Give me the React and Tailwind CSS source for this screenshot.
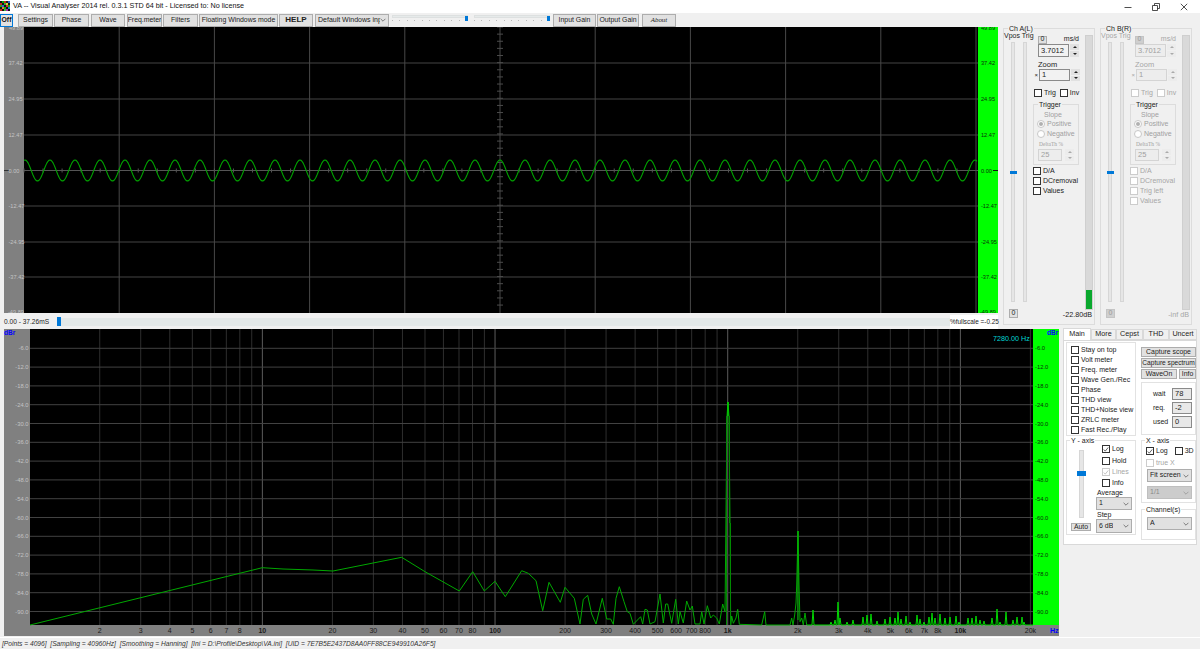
import React from "react";

const scopeY = [63, 99, 135, 170.5, 206, 242, 277];
const scopeLabels = ["37.42", "24.95", "12.47", "0.00", "-12.47", "-24.95", "-37.42"];
const scopeX = [119.2, 214.4, 309.6, 404.8, 500, 595.2, 690.4, 785.6, 880.8, 976];

function sinePoints() {
  const p = [];
  for (let x = 24; x <= 977; x += 1) {
    p.push(`${x},${(170.5 - 10.5 * Math.cos((2 * Math.PI * (x - 25)) / 25)).toFixed(2)}`);
  }
  return p.join(" ");
}

function Scope() {
  const ticks = [];
  for (let i = 0; i < 50; i++) ticks.push(24 + 19.04 * i);
  const vticks = [];
  for (let i = 0; i < 40; i++) vticks.push(27 + 7.13 * i);
  return (
    <svg viewBox="4 27 994 286" className="block w-[994px] h-[286px]">
      <rect x="4" y="27" width="20" height="286" fill="#808080" />
      <rect x="24" y="27" width="954" height="286" fill="#000" />
      <rect x="978" y="27" width="20" height="286" fill="#00ff00" />
      {scopeY.map((y) => (
        <line key={y} x1="24" x2="978" y1={y} y2={y} stroke={y === 170.5 ? "#555" : "#454545"} />
      ))}
      {scopeX.map((x) => (
        <line key={x} x1={x} x2={x} y1="27" y2="313" stroke="#484848" />
      ))}
      {ticks.map((x) => (
        <line key={x} x1={x} x2={x} y1="168.5" y2="172.5" stroke="#555" />
      ))}
      {vticks.map((y) => (
        <line key={y} x1="497" x2="503" y1={y} y2={y} stroke="#4c4c4c" />
      ))}
      <line x1="4" x2="9" y1="170.5" y2="170.5" stroke="#333" />
      <line x1="993" x2="998" y1="170.5" y2="170.5" stroke="#111" />
      <polyline points={sinePoints()} fill="none" stroke="#00a400" strokeWidth="1.1" />
      <g fontSize="5.6" fill="#c4c4c4">
        <text x="9" y="30">49.89</text>
        {scopeLabels.map((t, i) => (
          <text key={t} x="8.5" y={scopeY[i] + 2}>{t}</text>
        ))}
        <text x="8" y="314">-49.89</text>
      </g>
      <g fontSize="5.6" fill="#0a300a">
        <text x="981" y="30">49.89</text>
        {scopeLabels.map((t, i) => (
          <text key={t} x="981" y={scopeY[i] + 2}>{t}</text>
        ))}
        <text x="980" y="314">-49.89</text>
      </g>
    </svg>
  );
}

const fx = (f) => 29.7 + 232.67 * Math.log10(f);

const minorF = [2, 3, 4, 5, 6, 7, 8, 9, 20, 30, 40, 50, 60, 70, 80, 90, 200, 300, 400, 500, 600, 700, 800, 900, 2000, 3000, 4000, 5000, 6000, 7000, 8000, 9000, 20000];
const majorF = [10, 100, 1000, 10000];
const freqLabels = [
  [2, "2"], [3, "3"], [4, "4"], [5, "5"], [6, "6"], [7, "7"], [8, "8"], [10, "10", 1], [20, "20"], [30, "30"], [40, "40"], [50, "50"], [60, "60"], [70, "70"], [80, "80"], [100, "100", 1], [200, "200"], [300, "300"], [400, "400"], [500, "500"], [600, "600"], [700, "700"], [800, "800"], [1000, "1k", 1], [2000, "2k"], [3000, "3k"], [4000, "4k"], [5000, "5k"], [6000, "6k"], [7000, "7k"], [8000, "8k"], [10000, "10k", 1], [20000, "20k"],
];

const trace = "30,625 262.3,567.7 283,569 313,570 333,571 401.7,557.3 425,571.7 459.3,591 472.7,571.7 484.3,591 495,581.3 505.3,596.7 521.7,570.7 528.3,573.3 536,580.7 542.7,610.7 549,582.3 560.3,602.3 565,587.3 574.3,598.3 580,624 583.3,599.3 587.7,595.3 591.7,614 596,624 602.3,598.3 606.7,619 610.7,619 613.3,624.3 616,598.3 619.3,586.7 624,601.7 627.3,611.7 630,613.3 633.3,624.3 640.7,616.7 642.7,624 645,609.3 647.3,610 650,624 655,621.7 660,594 663.3,623 665.7,604 667.7,604 671.7,623.3 675.7,599.3 678.3,624 680,611.7 683.3,623 686.7,601 690,610 692.3,606 695,624 700,624 701.7,611.7 704,624 707.3,605.7 710.7,618 713.3,615 716.7,618 719.3,624 722.7,604 725,611.7 726,515 727,416 728,402 729,416 730,523 730.7,625 731.7,616 733.3,623.3 736,618 737.7,609.3 739.3,624.3 761.7,625 764.7,611.7 766,625 790,625 791.7,618 793,625 794.7,615 796,603 796.7,585 798,531 799,585 800,621.7 801.7,618 803.3,625 805,613 806.7,625";

const spikes = [[813, 610], [831, 622], [835, 620], [838, 602], [840, 618], [847, 622], [853, 620], [863, 617], [867, 615], [871, 614], [877, 621], [885, 619], [890, 617], [895, 618], [898, 612], [901, 619], [906, 616], [910, 622], [917, 615], [920, 619], [924, 622], [929, 617], [932, 613], [935, 618], [940, 614], [945, 618], [950, 617], [956, 616], [959, 622], [968, 618], [972, 618], [976, 616], [980, 620], [984, 621], [992, 618], [997, 609], [1000, 622], [1006, 612], [1013, 620], [1017, 617], [1022, 617], [1024, 622]];

function Spectrum() {
  const hs = [];
  for (let k = 1; k <= 15; k++) hs.push([329.5 + 18.8 * k, `-${6 * k}.0`]);
  const spikePts = ["807,625"];
  spikes.forEach(([x, y]) => {
    spikePts.push(`${x - 1},625`, `${x},${y}`, `${x + 1},625`);
  });
  spikePts.push("1033,625");
  return (
    <svg viewBox="4 329 1055 307" className="block w-[1055px] h-[307px]">
      <rect x="4" y="329" width="1055" height="307" fill="#808080" />
      <rect x="30" y="329" width="1003" height="296" fill="#000" />
      <rect x="1033" y="329" width="26" height="296" fill="#00ff00" />
      {minorF.map((f) => (
        <line key={f} x1={fx(f)} x2={fx(f)} y1="329" y2="625" stroke="#2e2e2e" />
      ))}
      {majorF.map((f) => (
        <line key={f} x1={fx(f)} x2={fx(f)} y1="329" y2="625" stroke="#5c5c5c" />
      ))}
      {hs.map(([y]) => (
        <line key={y} x1="30" x2="1033" y1={y} y2={y} stroke="#424242" />
      ))}
      <polyline points={spikePts.join(" ")} fill="none" stroke="#00d800" strokeWidth="1" />
      <polyline points={trace} fill="none" stroke="#00a800" strokeWidth="1" />
      <line x1="726.5" x2="726.5" y1="416" y2="625" stroke="#008a00" />
      <line x1="729.5" x2="729.5" y1="416" y2="523" stroke="#008a00" />
      <line x1="730.5" x2="730.5" y1="523" y2="625" stroke="#008a00" />
      <line x1="728" x2="728" y1="402" y2="416" stroke="#00d000" strokeWidth="1.4" />
      <line x1="798" x2="798" y1="531" y2="620" stroke="#00c000" />
      <g fontSize="5.8" fill="#c4c4c4">
        {hs.map(([y, t]) => (
          <text key={t} x="28.5" y={y + 2} textAnchor="end">{t}</text>
        ))}
      </g>
      <g fontSize="5.8" fill="#0a300a">
        {hs.map(([y, t]) => (
          <text key={t} x="1035" y={y + 2}>{t}</text>
        ))}
      </g>
      <g fontSize="7" fill="#1a1a1a">
        {freqLabels.map(([f, t, b]) => (
          <text key={t} x={fx(f)} y="633" textAnchor="middle" fontWeight={b ? "700" : "400"}>{t}</text>
        ))}
      </g>
      <text x="4" y="335" fontSize="6.5" fontWeight="700" fill="#0000ff">dBr</text>
      <text x="1047" y="335" fontSize="6.5" fontWeight="700" fill="#0000ff">dBr</text>
      <text x="1050" y="632.5" fontSize="7" fontWeight="700" fill="#0000ff">Hz</text>
      <text x="993" y="341" fontSize="7.2" fill="#00d8d8">7280.00 Hz</text>
    </svg>
  );
}

function Btn({ className = "", children }) {
  return (
    <div className={`flex items-center justify-center h-[13px] shrink-0 bg-[#e1e1e1] border border-[#adadad] text-[#222] text-[6.9px] whitespace-nowrap overflow-hidden ${className}`}>
      {children}
    </div>
  );
}

function Chevron({ color = "#444" }) {
  return (
    <svg viewBox="0 0 7 5" className="w-[6px] h-[4px] shrink-0">
      <path d="M0.5 1 L3.5 4 L6.5 1" fill="none" stroke={color} strokeWidth="0.8" />
    </svg>
  );
}

function Sel({ className = "", children, dis }) {
  return (
    <div className={`flex items-center justify-between pl-[2px] pr-[2px] shrink-0 border overflow-hidden whitespace-nowrap text-[7px] ${dis ? "bg-[#cccccc] border-[#bfbfbf] text-[#8a8a8a]" : "bg-[#e1e1e1] border-[#adadad] text-[#222]"} ${className}`}>
      <span className="overflow-hidden">{children}</span>
      <Chevron color={dis ? "#8a8a8a" : "#444"} />
    </div>
  );
}

function Check({ label, checked, dis, className = "" }) {
  return (
    <div className={`flex items-center gap-[2px] h-[10px] text-[7px] whitespace-nowrap ${dis ? "text-[#a6a6a6]" : "text-[#222]"} ${className}`}>
      <span className={`flex items-center justify-center w-[8px] h-[8px] shrink-0 border bg-white ${dis ? "border-[#cccccc]" : "border-[#333]"}`}>
        {checked && (
          <svg viewBox="0 0 8 8" className="w-[7px] h-[7px]">
            <path d="M1 4 L3 6.2 L7 1.2" fill="none" stroke={dis ? "#b0b0b0" : "#333"} strokeWidth="1" />
          </svg>
        )}
      </span>
      {label}
    </div>
  );
}

function Radio({ label, checked }) {
  return (
    <div className="flex items-center gap-[2px] h-[10px] text-[7px] text-[#a0a0a0] whitespace-nowrap">
      <span className="flex items-center justify-center w-[8px] h-[8px] rounded-full border border-[#c8c8c8] bg-white shrink-0">
        {checked && <span className="w-[4px] h-[4px] rounded-full bg-[#b0b0b0]" />}
      </span>
      {label}
    </div>
  );
}

function Group({ label, className = "", children }) {
  return (
    <div className={`relative border border-[#dcdcdc] ${className}`}>
      <span className="absolute left-[4px] -top-[4px] px-[1px] leading-[8px] text-[7px] bg-[#f0f0f0] text-[#222] whitespace-nowrap">
        {label}
      </span>
      {children}
    </div>
  );
}

function Spin({ dis, className = "" }) {
  const c = dis ? "#aaa" : "#222";
  return (
    <div className={`flex flex-col gap-[1px] w-[9px] shrink-0 ${className}`}>
      <div className={`flex-1 flex items-center justify-center ${dis ? "bg-[#ececec]" : "bg-[#e1e1e1]"}`}>
        <svg viewBox="0 0 6 3" className="w-[4px] h-[2px]"><path d="M0 3 L3 0 L6 3Z" fill={c} /></svg>
      </div>
      <div className={`flex-1 flex items-center justify-center ${dis ? "bg-[#ececec]" : "bg-[#e1e1e1]"}`}>
        <svg viewBox="0 0 6 3" className="w-[4px] h-[2px]"><path d="M0 0 L3 3 L6 0Z" fill={c} /></svg>
      </div>
    </div>
  );
}

function Input({ className = "", dis, children }) {
  return (
    <div className={`flex items-center pl-[2px] border text-[7.5px] shrink-0 ${dis ? "bg-[#ededed] border-[#d4d4d4] text-[#a0a0a0]" : "bg-[#f2f2f2] border-[#8a8a8a] text-[#222]"} ${className}`}>
      {children}
    </div>
  );
}

function ChPanel({ name, dis, level, db }) {
  const text = dis ? "text-[#a6a6a6]" : "text-[#222]";
  return (
    <Group label={name} className="flex w-[92px] h-[297px] shrink-0">
      <div className="flex flex-col w-[29px] shrink-0 pt-[3px]">
        <div className={`text-[7px] leading-[8px] whitespace-nowrap ${text}`}>Vpos Trig</div>
        <div className="flex gap-[8px] ml-[7px] mt-[2px]">
          <div className="relative w-[4px] h-[260px] bg-[#e6e6e6] border border-[#d6d6d6]">
            <span className="absolute -left-[2px] top-[128px] w-[7px] h-[3px] bg-[#0078d7]" />
          </div>
          <div className="w-[4px] h-[260px] bg-[#e6e6e6] border border-[#d6d6d6]" />
        </div>
        <div className={`flex items-center justify-center ml-[5px] mt-[7px] w-[9px] h-[9px] text-[7px] border ${dis ? "bg-[#cfcfcf] border-[#c4c4c4] text-[#999]" : "bg-[#e1e1e1] border-[#adadad] text-[#222]"}`}>0</div>
      </div>
      <div className="flex flex-col w-[50px] shrink-0 pt-[6px]">
        <div className="flex items-center justify-between h-[9px] pl-[5px] pr-[4px] w-[50px]">
          <div className={`flex items-center justify-center w-[9px] h-[8px] text-[7px] border ${dis ? "bg-[#cfcfcf] border-[#c4c4c4] text-[#999]" : "bg-[#e1e1e1] border-[#adadad] text-[#222]"}`}>0</div>
          <span className={`text-[7px] ${text}`}>ms/d</span>
        </div>
        <div className="flex gap-[1px] ml-[5px] h-[13px]">
          <Input dis={dis} className="w-[31px] h-[13px]">3.7012</Input>
          <Spin dis={dis} />
        </div>
        <div className={`ml-[5px] mt-[4px] h-[8px] leading-[8px] text-[7.5px] ${text}`}>Zoom</div>
        <div className="flex gap-[1px] h-[12px] items-stretch">
          <span className={`w-[5px] text-[6px] leading-[12px] text-right ${text}`}>×</span>
          <Input dis={dis} className="w-[31px] h-[12px]">1</Input>
          <Spin dis={dis} />
        </div>
        <div className="flex gap-[3px] ml-[1px] mt-[7px]">
          <Check label="Trig" dis={dis} />
          <Check label="Inv" dis={dis} className="ml-[1px]" />
        </div>
        <Group label="Trigger" className="w-[46px] h-[61px] mt-[6px] pt-[5px] pl-[3px]">
          <div className="pl-[7px] h-[9px] leading-[9px] text-[7px] text-[#a0a0a0]">Slope</div>
          <Radio label="Positive" checked />
          <Radio label="Negative" />
          <div className="mt-[1px] h-[8px] leading-[8px] pl-[2px] text-[5.5px] text-[#a0a0a0] font-['Liberation_Serif',serif]">DeltaTh %</div>
          <div className="flex gap-[3px] ml-[1px] mt-[1px] h-[12px]">
            <Input dis className="w-[24px] h-[12px]">25</Input>
            <Spin dis />
          </div>
        </Group>
        <div className="flex flex-col mt-[1px]">
          <Check label="D/A" dis={dis} className="h-[9.5px]" />
          <Check label="DCremoval" dis={dis} className="h-[9.5px]" />
          {dis && <Check label="Trig left" dis className="h-[9.5px]" />}
          <Check label="Values" dis={dis} className="h-[9.5px]" />
        </div>
      </div>
      <div className="flex flex-col items-end w-[12px] shrink-0 pt-[6px]">
        <div className="flex flex-col justify-end w-[8px] h-[275px] mr-[2px] bg-[#d9d9d9] border border-[#cfcfcf]">
          {level && <div className="w-full h-[19px] bg-[#0aa82e]" />}
        </div>
        <div className={`mr-[3px] text-[7.2px] whitespace-nowrap w-[4px] flex justify-end ${dis ? "text-[#a6a6a6]" : "text-[#222]"}`}>
          {db}
        </div>
      </div>
    </Group>
  );
}

function HSlider() {
  return (
    <div className="relative w-[76px] h-[13px] shrink-0">
      <div className="h-[3px] mt-[2px] bg-[#e6eaea] border border-[#dde0e0]" />
      <div className="flex justify-between mt-[2px] pr-[1px]">
        {Array.from({ length: 11 }).map((_, i) => (
          <span key={i} className="w-[1px] h-[1px] bg-[#b8b8b8]" />
        ))}
      </div>
      <span className="absolute right-0 top-[1px] w-[3px] h-[5px] bg-[#0078d7]" />
    </div>
  );
}

function WindowIcon() {
  const colors = ["#111", "#0a0", "#c22", "#222", "#26c", "#c22", "#111", "#3a3", "#dc3", "#111", "#2a2", "#36c", "#111", "#c33", "#1a1", "#111", "#d83", "#1a1", "#111", "#27c", "#c22", "#111", "#3b3", "#a2a", "#111"];
  return (
    <svg viewBox="0 0 5 5" className="w-[10px] h-[10px]" shapeRendering="crispEdges">
      {colors.map((c, i) => (
        <rect key={i} x={i % 5} y={Math.floor(i / 5)} width="1" height="1" fill={c} />
      ))}
    </svg>
  );
}

function TitleBar() {
  return (
    <div className="flex items-center h-[13px] bg-white shrink-0">
      <div className="mb-[2px]"><WindowIcon /></div>
      <span className="ml-[3px] text-[7.2px] text-[#111] whitespace-nowrap">VA -- Visual Analyser 2014 rel. 0.3.1 STD 64 bit - Licensed to: No license</span>
      <div className="ml-auto flex items-center gap-[20px] pr-[12px]">
        <svg viewBox="0 0 8 8" className="w-[8px] h-[8px]"><path d="M0.5 4.5 H7.5" stroke="#222" strokeWidth="0.8" /></svg>
        <svg viewBox="0 0 8 8" className="w-[8px] h-[8px]"><path d="M0.5 2.5 H5.5 V7.5 H0.5 Z M2.5 2.5 V0.5 H7.5 V5.5 H5.5" fill="none" stroke="#222" strokeWidth="0.8" /></svg>
        <svg viewBox="0 0 8 8" className="w-[8px] h-[8px]"><path d="M0.8 0.8 L7.2 7.2 M7.2 0.8 L0.8 7.2" stroke="#222" strokeWidth="0.8" /></svg>
      </div>
    </div>
  );
}

function Toolbar() {
  return (
    <div className="flex items-center h-[14px] shrink-0 bg-[#f0f0f0]">
      <div className="flex items-center justify-center w-[13px] h-[13px] shrink-0 bg-[#e1e1e1] border-[1.5px] border-[#0078d7] text-[#111] text-[6.8px] font-bold">Off</div>
      <Btn className="ml-[5px] w-[35px]">Settings</Btn>
      <Btn className="ml-[1px] w-[35px]">Phase</Btn>
      <Btn className="ml-[2px] w-[34px]">Wave</Btn>
      <Btn className="ml-[2px] w-[35px]">Freq.meter</Btn>
      <Btn className="ml-[1px] w-[35px]">Filters</Btn>
      <Btn className="ml-[1px] w-[79px]">Floating Windows mode</Btn>
      <Btn className="ml-[1px] w-[34px] font-bold !text-[8px]">HELP</Btn>
      <Sel className="ml-[2px] w-[74px] h-[13px]">Default Windows inp</Sel>
      <div className="ml-[3px]"><HSlider /></div>
      <div className="ml-[6px]"><HSlider /></div>
      <Btn className="ml-[3px] w-[43px]">Input Gain</Btn>
      <Btn className="ml-[1px] w-[42px]">Output Gain</Btn>
      <Btn className="ml-[3px] w-[34px] italic font-['Liberation_Serif',serif]">About</Btn>
    </div>
  );
}

function ScopeFooter() {
  return (
    <div className="flex items-center h-[15px] mt-[1px] text-[6.6px] text-[#222]">
      <span className="w-[53px] shrink-0 whitespace-nowrap">0.00 - 37.26mS</span>
      <span className="w-[4px] h-[9px] shrink-0 bg-[#0078d7]" />
      <div className="w-[889px] h-[8px] shrink-0 bg-[#e3e8e8]" />
      <span className="w-[48px] h-[14px] leading-[14px] bg-white whitespace-nowrap text-[6.4px] text-right shrink-0">%fullscale =-0.25</span>
    </div>
  );
}

function TopRight() {
  return (
    <div className="flex gap-[5px] ml-[5px] pt-[1px]">
      <ChPanel name="Ch A(L)" level db="-22.80dB" />
      <ChPanel name="Ch B(R)" dis db="-inf dB" />
    </div>
  );
}

function Tabs() {
  const others = [["More", "w-[25px]"], ["Cepst", "w-[27px]"], ["THD", "w-[26px]"], ["Uncert", "w-[28px]"]];
  return (
    <div className="flex h-[12px] text-[7.2px] text-[#222]">
      <div className="flex items-center justify-center w-[28px] h-[12px] bg-white border border-b-0 border-[#d9d9d9]">Main</div>
      {others.map(([t, w]) => (
        <div key={t} className={`flex items-center justify-center h-[11px] mt-[1px] bg-[#f0f0f0] border border-[#d9d9d9] ${w}`}>{t}</div>
      ))}
    </div>
  );
}

const mainChecks = ["Stay on top", "Volt meter", "Freq. meter", "Wave Gen./Rec", "Phase", "THD view", "THD+Noise view", "ZRLC meter", "Fast Rec./Play"];

function MainTab() {
  return (
    <div className="flex gap-[5px] w-[134px] h-[205px] pl-[2px] pt-[1px] bg-white border border-[#d9d9d9]">
      <div className="flex flex-col w-[70px] shrink-0">
        <div className="w-[70px] h-[94px] pl-[4px] pt-[2px] border border-[#e2e2e2]">
          {mainChecks.map((c) => (
            <Check key={c} label={c} />
          ))}
        </div>
        <div className="relative w-[70px] h-[95px] mt-[4px] flex border border-[#e2e2e2]">
          <span className="absolute left-[3px] -top-[4px] px-[1px] leading-[8px] bg-white text-[7px] text-[#222]">Y - axis</span>
          <div className="flex flex-col items-center w-[28px] shrink-0 pt-[9px]">
            <div className="relative w-[5px] h-[68px] bg-[#e6e6e6] border border-[#d6d6d6]">
              <span className="absolute -left-[3px] top-[20px] w-[9px] h-[5px] bg-[#0078d7]" />
            </div>
            <Btn className="mt-[5px] w-[20px] !h-[8px]">Auto</Btn>
          </div>
          <div className="flex flex-col pl-[7px] pt-[3px]">
            <Check label="Log" checked />
            <div className="h-[2px]" />
            <Check label="Hold" />
            <div className="h-[1px]" />
            <Check label="Lines" checked dis />
            <div className="h-[1px]" />
            <Check label="Info" />
            <div className="-ml-[5px] h-[8px] leading-[8px] text-[7px] text-[#222] mt-[1px]">Average</div>
            <Sel className="-ml-[6px] w-[36px] h-[13px]">1</Sel>
            <div className="-ml-[5px] h-[9px] leading-[9px] text-[7px] text-[#222]">Step</div>
            <Sel className="-ml-[6px] w-[36px] h-[14px]">6 dB</Sel>
          </div>
        </div>
      </div>
      <div className="flex flex-col w-[55px] shrink-0 pt-[5px]">
        <Btn className="!h-[10px] w-[55px]">Capture scope</Btn>
        <Btn className="!h-[10px] w-[55px] mt-[1px] !text-[6.6px]">Capture spectrum</Btn>
        <div className="flex gap-[2px] mt-[1px]">
          <Btn className="!h-[10px] w-[36px]">WaveOn</Btn>
          <Btn className="!h-[10px] w-[17px]">Info</Btn>
        </div>
        <div className="flex flex-col gap-[2px] w-[55px] h-[53px] mt-[3px] pt-[5px] pl-[11px] border border-[#e2e2e2] text-[7px] text-[#222]">
          <div className="flex items-center"><span className="w-[19px]">wait</span><Input className="w-[20px] h-[12px] !bg-[#e8e8e8]">78</Input></div>
          <div className="flex items-center"><span className="w-[19px]">req.</span><Input className="w-[20px] h-[12px] !bg-[#e8e8e8]">-2</Input></div>
          <div className="flex items-center"><span className="w-[19px]">used</span><Input className="w-[20px] h-[12px] !bg-[#e8e8e8]">0</Input></div>
        </div>
        <div className="relative w-[55px] h-[63px] mt-[5px] pl-[4px] pt-[5px] border border-[#e2e2e2]">
          <span className="absolute left-[3px] -top-[4px] px-[1px] leading-[8px] bg-white text-[7px] text-[#222]">X - axis</span>
          <div className="flex gap-[7px]">
            <Check label="Log" checked />
            <Check label="3D" />
          </div>
          <Check label="true X" dis className="mt-[2px]" />
          <Sel className="ml-[1px] mt-[1px] w-[45px] h-[13px]">Fit screen</Sel>
          <Sel dis className="ml-[1px] mt-[4px] w-[45px] h-[13px]">1/1</Sel>
        </div>
        <div className="relative w-[55px] h-[31px] mt-[6px] pl-[4px] pt-[7px] border border-[#e2e2e2]">
          <span className="absolute left-[3px] -top-[4px] px-[1px] leading-[8px] bg-white text-[7px] text-[#222]">Channel(s)</span>
          <Sel className="ml-[1px] w-[45px] h-[13px]">A</Sel>
        </div>
      </div>
    </div>
  );
}

export default function App() {
  return (
    <div className="flex flex-col w-[1200px] h-[649px] overflow-hidden bg-[#f0f0f0] font-['Liberation_Sans',sans-serif]">
      <TitleBar />
      <Toolbar />
      <div className="flex h-[302px] shrink-0">
        <div className="w-[998px] pl-[4px] shrink-0">
          <Scope />
          <ScopeFooter />
        </div>
        <TopRight />
      </div>
      <div className="flex h-[308px] shrink-0">
        <div className="w-[1059px] pl-[4px] shrink-0">
          <Spectrum />
        </div>
        <div className="ml-[4px] -mt-[1px] flex flex-col">
          <Tabs />
          <MainTab />
        </div>
      </div>
      <div className="flex items-center h-[12px] shrink-0 pl-[2px] border-t border-white text-[6.67px] italic text-[#333] whitespace-pre">
        {"[Points = 4096]  [Sampling = 40960Hz]  [Smoothing = Hanning]  [Ini = D:\\Profile\\Desktop\\VA.ini]  [UID = 7E7B5E2437D8AA0FF88CE949910A26F5]"}
      </div>
    </div>
  );
}
